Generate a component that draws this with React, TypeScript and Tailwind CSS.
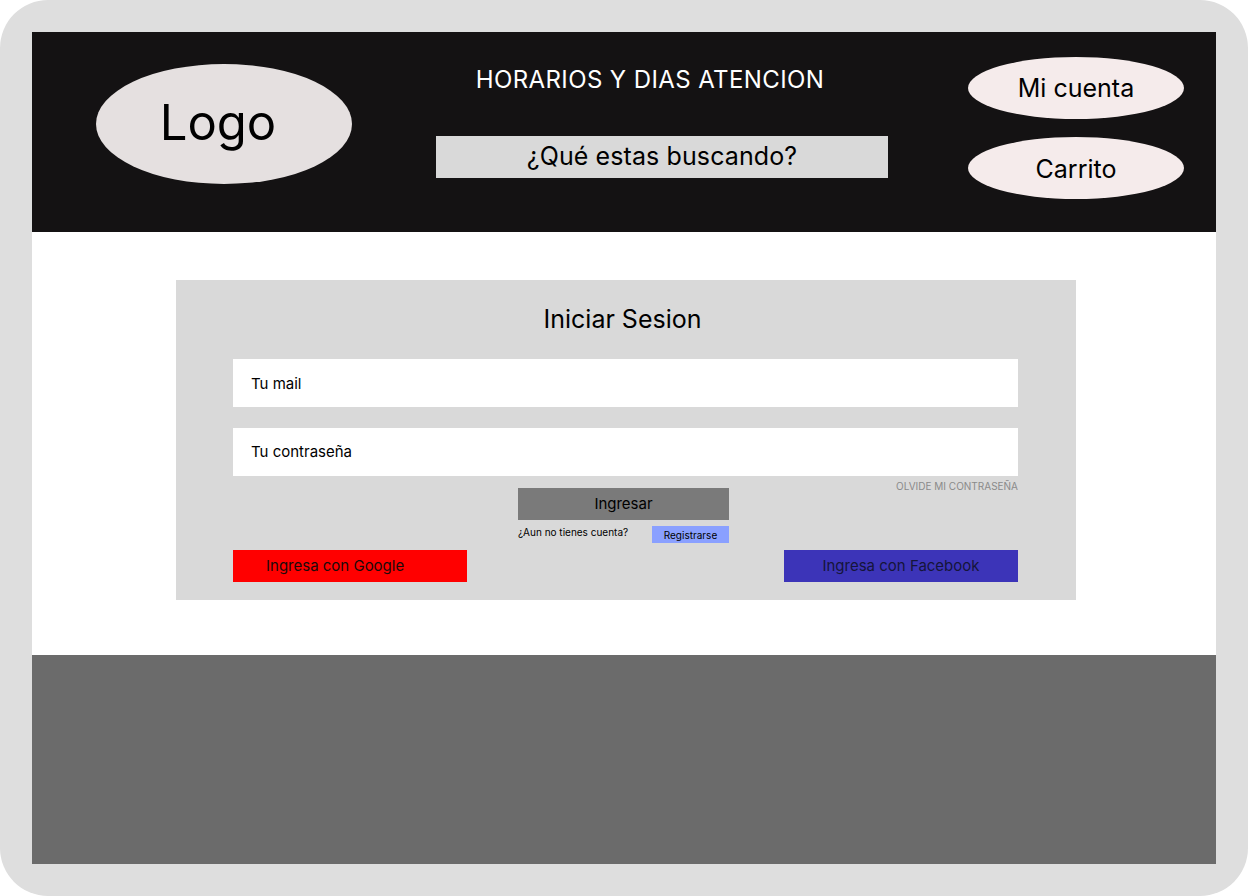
import React from "react";

export default function App() {
  return (
    <div className="w-[1248px] h-[896px] bg-white" style={{ fontFamily: "Inter, 'Noto Sans', sans-serif" }}>
      <div className="w-full h-full bg-[#dedede] rounded-[48px] p-8 flex flex-col">
        <header className="h-[200px] bg-[#141213] flex items-start shrink-0">
          <div className="w-[256px] h-[120px] ml-16 mt-8 rounded-[50%] bg-[#e5e0e0] flex items-center justify-center text-[49px] text-black leading-none pb-[4px] pr-[12px]">
            Logo
          </div>
          <div className="ml-[84px] w-[452px] flex flex-col items-center">
            <div className="mt-[33px] h-[30px] text-[24px] leading-[30px] text-white tracking-[0.4px] pr-[24px]">HORARIOS Y DIAS ATENCION</div>
            <div className="mt-[41px] w-[452px] h-[42px] bg-[#d9d9d9] flex items-center justify-center text-[25px] text-black tracking-[0.1px]">
              ¿Qué estas buscando?
            </div>
          </div>
          <div className="ml-[80px] mt-[25px] flex flex-col gap-[18px]">
            <div className="w-[216px] h-[62px] rounded-[50%] bg-[#f5ebeb] flex items-center justify-center text-[25px] text-black pt-[2px]">Mi cuenta</div>
            <div className="w-[216px] h-[62px] rounded-[50%] bg-[#f5ebeb] flex items-center justify-center text-[25px] text-black pt-[3px]">Carrito</div>
          </div>
        </header>
        <main className="h-[423px] bg-white shrink-0 pt-12 pl-[144px]">
          <div className="w-[900px] h-[320px] bg-[#d9d9d9] flex flex-col pl-[57px] pr-[58px]">
            <div className="mt-[24px] text-center text-[25px] leading-[30px] text-black pr-[6px]">Iniciar Sesion</div>
            <div className="mt-[25px] h-[48px] bg-white flex items-center pl-[18px] text-[15px] text-black pt-[3px]">Tu mail</div>
            <div className="mt-[21px] h-[48px] bg-white flex items-center pl-[18px] text-[15px] text-black">Tu contraseña</div>
            <div className="relative h-[74px]">
              <div className="absolute right-0 top-[5px] text-[10px] leading-[10px] text-[#8a8a8a]">OLVIDE MI CONTRASEÑA</div>
              <div className="absolute left-[285px] top-[12px] w-[211px]">
                <div className="h-[32px] bg-[#7a7a7a] flex items-center justify-center text-[15px] text-black">Ingresar</div>
                <div className="mt-[6px] flex items-start justify-between">
                  <span className="text-[10px] leading-[12px] text-black">¿Aun no tienes cuenta?</span>
                  <span className="w-[77px] h-[17px] bg-[#8aa0ff] flex items-center justify-center text-[10px] text-black pt-[1px]">Registrarse</span>
                </div>
              </div>
            </div>
            <div className="flex justify-between">
              <div className="w-[234px] h-[32px] bg-[#ff0000] flex items-center pl-[33px] text-[15px] text-[#1a0a0a]">Ingresa con Google</div>
              <div className="w-[234px] h-[32px] bg-[#3c34b8] flex items-center justify-center text-[15px] text-[#15153a]">Ingresa con Facebook</div>
            </div>
          </div>
        </main>
        <footer className="flex-1 bg-[#6b6b6b]"></footer>
      </div>
    </div>
  );
}
